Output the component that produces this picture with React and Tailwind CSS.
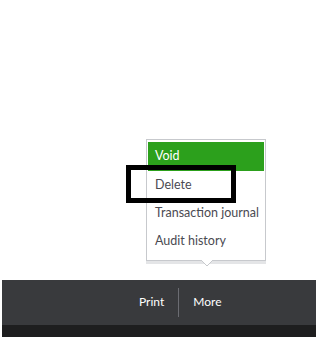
import React from 'react';

const items = ['Void', 'Delete', 'Transaction journal', 'Audit history'];

export default function App() {
  return (
    <div className="relative w-[319px] h-[341px] bg-white overflow-hidden" style={{ fontFamily: 'Lato, "Noto Sans", sans-serif' }}>
      <div className="h-[280px]" />

      {/* bottom action bar */}
      <div className="mx-[2px] w-[314px] h-[45px] bg-[#393a3d] flex items-center text-[12px] text-white">
        <div className="ml-[137px] -mt-[2px]">Print</div>
        <div className="mx-[14px] w-px h-[29px] bg-[#6b6c72]" />
        <div className="-mt-[2px]">More</div>
      </div>
      <div className="mx-[2px] w-[314px] h-[12px] bg-[#1e1e1f]" />

      {/* popover menu */}
      <div className="absolute left-[146px] top-[139px] w-[120px] border border-[#c7c9cd] bg-white px-px pt-[2px] pb-[5px] shadow-[0_3px_0_#e4e5e7]">
        {items.map((label, i) => (
          <div
            key={label}
            className={
              i === 0
                ? 'h-[29px] flex items-center pl-[7px] bg-[#2ca01c] text-white text-[12.5px]'
                : 'h-[28px] flex items-center pl-[7px] text-[#4a4a52] text-[12.5px]'
            }
          >
            {label}
          </div>
        ))}
        <svg className="absolute left-[54px] -bottom-[8px]" width="12" height="8" viewBox="0 0 12 8">
          <path d="M0 0 L6 6 L12 0" fill="white" stroke="#c7c9cd" strokeWidth="1" />
        </svg>
      </div>

      {/* highlight annotation */}
      <div className="absolute left-[126px] top-[165px] w-[110px] h-[38px] border-[5px] border-black" />
    </div>
  );
}
